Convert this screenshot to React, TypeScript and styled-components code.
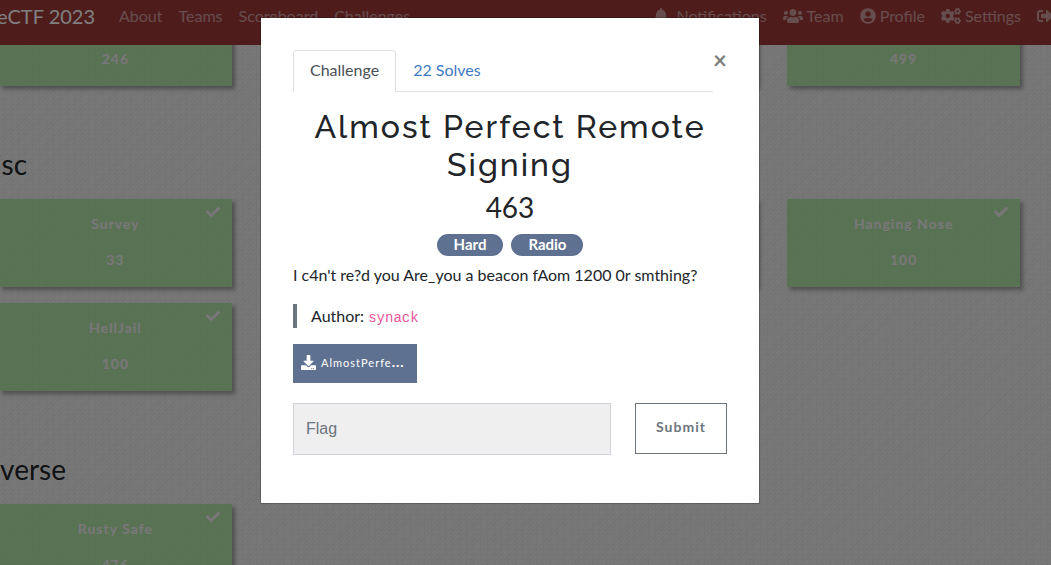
import React from "react";
import styled, { createGlobalStyle } from "styled-components";
import {
  FaBell,
  FaCheck,
  FaCogs,
  FaDownload,
  FaSignOutAlt,
  FaUserCircle,
  FaUsers,
} from "react-icons/fa";

const GlobalStyle = createGlobalStyle`
  *, *::before, *::after { box-sizing: border-box; }
  html, body { margin: 0; height: 100%; overflow: hidden; }
  body {
    font-family: Lato, "Liberation Sans", sans-serif;
    font-size: 16px;
    line-height: 24px;
    color: #212529;
  }
`;

/* The view is scrolled sideways by the gutter, as well as down the board. */
const gutter = 31;

const Page = styled.div`
  position: relative;
  height: 100vh;
  margin-left: -${gutter}px;
  overflow: hidden;
  background-color: #f0f0f0;
  background-image:
    repeating-linear-gradient(135deg, rgba(0, 0, 0, 0.03) 0 1px, transparent 1px 3px),
    repeating-linear-gradient(90deg, rgba(0, 0, 0, 0.02) 0 1px, transparent 1px 7px),
    repeating-linear-gradient(0deg, rgba(0, 0, 0, 0.015) 0 1px, transparent 1px 5px);
`;

const Navbar = styled.nav`
  position: relative;
  z-index: 1;
  display: flex;
  align-items: center;
  height: 45px;
  padding: 0 0 13px 28px;
  background: #9e3838;
  white-space: nowrap;
`;

const Brand = styled.a`
  margin-right: 24px;
  font-size: 20px;
  color: #fff;
  text-decoration: none;
`;

const NavGroup = styled.div<{ $end?: boolean }>`
  display: flex;
  gap: 16px;
  margin-left: ${(p) => (p.$end ? "auto" : "0")};
  margin-right: ${(p) => (p.$end ? "-2px" : "0")};
`;

const NavLink = styled.a<{ $gap?: number }>`
  display: flex;
  align-items: center;
  gap: ${(p) => p.$gap ?? 4}px;
  color: rgba(255, 255, 255, 0.5);
  text-decoration: none;
`;

const Board = styled.main`
  margin-top: -47px;
`;

const Category = styled.h3`
  margin: 61px 0 17px;
  font-size: 28px;
  line-height: 35px;
  font-weight: 400;
`;

const CardGrid = styled.div`
  display: grid;
  grid-template-columns: repeat(4, 1fr);
  gap: 16px 30px;
  padding: 0 31px 0 30px;
`;

const Card = styled.button<{ $column?: number }>`
  position: relative;
  display: flex;
  flex-direction: column;
  align-items: center;
  gap: 12px;
  grid-column: ${(p) => p.$column ?? "auto"};
  height: 88px;
  padding: 13px;
  border: 0;
  background: rgba(139, 224, 120, 0.58);
  box-shadow: 3px 3px 4px rgba(0, 0, 0, 0.32);
  color: #f3eff3;
  font: 700 14px/24px Lato, sans-serif;
  letter-spacing: 1px;
`;

const CardLine = styled.span`
  min-height: 24px;
`;

const Solved = styled(FaCheck)`
  position: absolute;
  top: 6px;
  right: 12px;
`;

const Backdrop = styled.div`
  position: absolute;
  inset: 0;
  z-index: 2;
  display: flex;
  justify-content: center;
  align-items: flex-start;
  padding-top: 17px;
  background: rgba(0, 0, 0, 0.5);
`;

const Dialog = styled.section`
  width: 100%;
  max-width: 500px;
  padding: 32px 32px 48px;
  border: 1px solid rgba(0, 0, 0, 0.2);
  background: #fff;
  background-clip: padding-box;
`;

const DialogHead = styled.header`
  display: flex;
  align-items: flex-start;
`;

const Tabs = styled.div`
  display: flex;
  flex: 1;
  height: 42px;
  border-bottom: 1px solid #dee2e6;
`;

const Tab = styled.button<{ $active?: boolean }>`
  height: 42px;
  padding: 0 16px 2px;
  border: 1px solid ${(p) => (p.$active ? "#dee2e6" : "transparent")};
  border-bottom-color: ${(p) => (p.$active ? "#fff" : "transparent")};
  border-radius: 4px 4px 0 0;
  background: ${(p) => (p.$active ? "#fff" : "transparent")};
  color: ${(p) => (p.$active ? "#495057" : "#3f7abf")};
  font: 400 16px/24px Lato, sans-serif;
`;

const Close = styled.button`
  width: 14px;
  padding: 0;
  border: 0;
  background: none;
  color: #7f7f7f;
  font: 700 24px/20px Lato, sans-serif;
`;

const Title = styled.h2`
  margin: 16px 0 6px;
  font: 500 32px/38px Raleway, Inter, sans-serif;
  letter-spacing: 2px;
  text-align: center;
`;

const Points = styled.h3`
  margin: 0 0 10px;
  font-size: 28px;
  line-height: 34px;
  font-weight: 400;
  text-align: center;
`;

const Tags = styled.div`
  display: flex;
  justify-content: center;
  gap: 8px;
`;

const Tag = styled.span`
  padding: 0 17px 2px;
  border-radius: 11px;
  background: #5f7190;
  color: #fff;
  font-size: 15px;
  line-height: 20px;
  font-weight: 700;
`;

const Description = styled.p`
  margin: 7px 0 17px;
`;

const Quote = styled.blockquote`
  margin: 0 0 16px;
  padding-left: 14px;
  border-left: 4px solid #6c757d;
`;

const Code = styled.code`
  color: #e8559a;
  font: 14px "Liberation Mono", monospace;
`;

const Download = styled.a`
  display: flex;
  align-items: center;
  gap: 5px;
  width: 124px;
  height: 39px;
  padding: 0 12px 3px 8px;
  background: #5f7190;
  color: #fff;
  font-size: 14px;
  font-weight: 700;
  letter-spacing: 1px;
  text-decoration: none;

  svg { flex: none; }
`;

const FileName = styled.small`
  font-size: 11px;
  font-weight: 400;
  white-space: nowrap;
`;

const FlagForm = styled.form`
  display: flex;
  align-items: flex-start;
  gap: 24px;
  margin-top: 20px;
`;

const FlagInput = styled.input`
  flex: 1;
  min-width: 0;
  height: 52px;
  padding: 0 12px;
  border: 1px solid #ced4da;
  border-radius: 0;
  background: #efefef;
  font: 16px "Liberation Sans", sans-serif;

  &::placeholder { color: #6c757d; opacity: 1; }
`;

const Submit = styled.button`
  width: 92px;
  height: 51px;
  padding: 0 0 3px;
  border: 1px solid #6c757d;
  background: #fff;
  color: #6c757d;
  font: 700 14px/24px Lato, sans-serif;
  letter-spacing: 1px;
`;

type ChallengeProps = { name?: string; points?: number; column?: number };

function Challenge({ name, points, column }: ChallengeProps) {
  return (
    <Card $column={column} type="button">
      <CardLine>{name}</CardLine>
      <CardLine>{points}</CardLine>
      <Solved size={14} />
    </Card>
  );
}

export default function App() {
  return (
    <>
      <GlobalStyle />
      <Page>
        <Navbar>
          <Brand href="#">eCTF 2023</Brand>
          <NavGroup>
            <NavLink href="#about">About</NavLink>
            <NavLink href="#teams">Teams</NavLink>
            <NavLink href="#scoreboard">Scoreboard</NavLink>
            <NavLink href="#challenges">Challenges</NavLink>
          </NavGroup>
          <NavGroup $end>
            <NavLink href="#notifications" $gap={7}><FaBell />Notifications</NavLink>
            <NavLink href="#team"><FaUsers size={20} />Team</NavLink>
            <NavLink href="#profile"><FaUserCircle />Profile</NavLink>
            <NavLink href="#settings"><FaCogs size={20} />Settings</NavLink>
            <NavLink href="#logout" aria-label="Logout"><FaSignOutAlt /></NavLink>
          </NavGroup>
        </Navbar>

        <Board>
          <CardGrid>
            <Challenge points={246} />
            <Challenge column={3} />
            <Challenge points={499} />
          </CardGrid>
          <Category>Misc</Category>
          <CardGrid>
            <Challenge name="Survey" points={33} />
            <Challenge column={3} />
            <Challenge name="Hanging Nose" points={100} />
            <Challenge name="HellJail" points={100} />
          </CardGrid>
          <Category>Reverse</Category>
          <CardGrid>
            <Challenge name="Rusty Safe" points={476} />
          </CardGrid>
        </Board>

        <Backdrop>
          <Dialog role="dialog" aria-modal="true" aria-labelledby="challenge-title">
            <DialogHead>
              <Tabs role="tablist">
                <Tab role="tab" type="button" aria-selected $active>Challenge</Tab>
                <Tab role="tab" type="button" aria-selected={false}>22 Solves</Tab>
              </Tabs>
              <Close type="button" aria-label="Close">×</Close>
            </DialogHead>
            <Title id="challenge-title">Almost Perfect Remote Signing</Title>
            <Points>463</Points>
            <Tags>
              <Tag>Hard</Tag>
              <Tag>Radio</Tag>
            </Tags>
            <Description>I c4n't re?d you Are_you a beacon fAom 1200 0r smthing?</Description>
            <Quote>Author: <Code>synack</Code></Quote>
            <Download href="#download">
              <FaDownload size={15} />
              <span><FileName>AlmostPerfe</FileName>...</span>
            </Download>
            <FlagForm>
              <FlagInput type="text" aria-label="Flag" placeholder="Flag" />
              <Submit type="button">Submit</Submit>
            </FlagForm>
          </Dialog>
        </Backdrop>
      </Page>
    </>
  );
}
